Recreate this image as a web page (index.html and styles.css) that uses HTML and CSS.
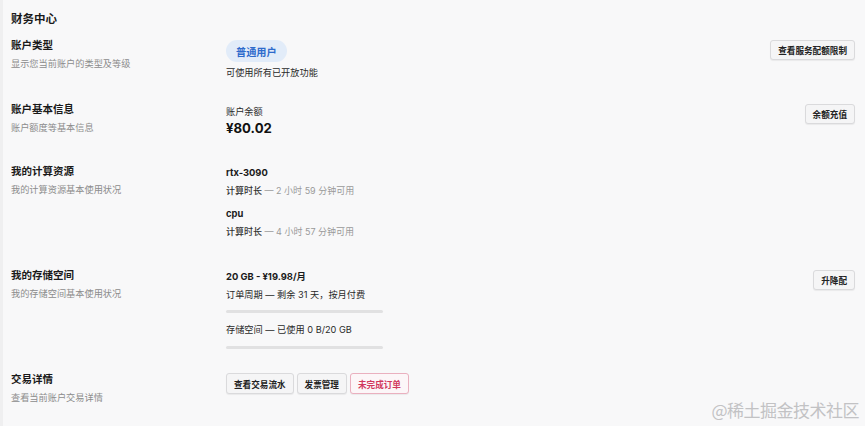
FILE: index.html
```html
<!DOCTYPE html>
<html lang="zh-CN">
<head>
<meta charset="utf-8">
<title>财务中心</title>
<link rel="stylesheet" href="styles.css">
</head>
<body>
<div class="page">
  <h1 class="page-title">财务中心</h1>

  <section class="row">
    <div class="row-head">
      <div class="row-title">账户类型</div>
      <div class="row-desc">显示您当前账户的类型及等级</div>
    </div>
    <div class="row-body">
      <span class="badge">普通用户</span>
      <div class="text mt-badge">可使用所有已开放功能</div>
    </div>
    <div class="row-actions"><button class="btn">查看服务配额限制</button></div>
  </section>

  <section class="row row-balance">
    <div class="row-head">
      <div class="row-title">账户基本信息</div>
      <div class="row-desc">账户额度等基本信息</div>
    </div>
    <div class="row-body">
      <div class="text label">账户余额</div>
      <div class="amount">¥80.02</div>
    </div>
    <div class="row-actions"><button class="btn">余额充值</button></div>
  </section>

  <section class="row row-compute">
    <div class="row-head">
      <div class="row-title">我的计算资源</div>
      <div class="row-desc">我的计算资源基本使用状况</div>
    </div>
    <div class="row-body">
      <div class="res">
        <div class="res-name">rtx-3090</div>
        <div class="res-detail"><span class="res-key">计算时长</span> — 2 小时 59 分钟可用</div>
      </div>
      <div class="res">
        <div class="res-name">cpu</div>
        <div class="res-detail"><span class="res-key">计算时长</span> — 4 小时 57 分钟可用</div>
      </div>
    </div>
    <div class="row-actions"></div>
  </section>

  <section class="row">
    <div class="row-head">
      <div class="row-title">我的存储空间</div>
      <div class="row-desc">我的存储空间基本使用状况</div>
    </div>
    <div class="row-body">
      <div class="res-name">20 GB - ¥19.98/月</div>
      <div class="text store-line">订单周期 — 剩余 31 天，按月付费</div>
      <div class="bar"><div class="bar-fill" style="width: 0%"></div></div>
      <div class="text store-line2">存储空间 — 已使用 0 B/20 GB</div>
      <div class="bar"><div class="bar-fill" style="width: 0%"></div></div>
    </div>
    <div class="row-actions"><button class="btn">升降配</button></div>
  </section>

  <section class="row">
    <div class="row-head">
      <div class="row-title">交易详情</div>
      <div class="row-desc">查看当前账户交易详情</div>
    </div>
    <div class="row-body btn-group">
      <button class="btn">查看交易流水</button>
      <button class="btn">发票管理</button>
      <button class="btn btn-danger">未完成订单</button>
    </div>
    <div class="row-actions"></div>
  </section>

  <div class="watermark">@稀土掘金技术社区</div>
</div>
</body>
</html>
```

FILE: styles.css
```css
* { box-sizing: border-box; }
html, body { margin: 0; padding: 0; }
body {
  background: #f8f8f9;
  font-family: "Inter", "Noto Sans CJK SC", sans-serif;
  color: #1f1f1f;
  width: 865px;
  height: 426px;
  overflow: hidden;
}
.page {
  position: relative;
  height: 426px;
  border-left: 3px solid #efeff0;
  padding: 11px 10px 0 8px;
}
.page-title {
  margin: 0 0 12px 0;
  font-size: 11.5px;
  line-height: 16px;
  font-weight: 700;
  color: #1a1a1a;
}
.row {
  display: grid;
  grid-template-columns: 215px 1fr auto;
  align-items: start;
  margin-bottom: 24px;
}
.row-balance { margin-bottom: 28px; }
.row-compute { margin-bottom: 31px; }
.row-title {
  font-size: 10.5px;
  line-height: 14px;
  font-weight: 700;
  color: #1a1a1a;
}
.row-desc {
  margin-top: 4px;
  font-size: 9.2px;
  line-height: 13px;
  color: #8c8c8c;
}
.row-body {
  display: flex;
  flex-direction: column;
  align-items: flex-start;
  padding-top: 1px;
}
.row-actions {
  display: flex;
  justify-content: flex-end;
  padding-top: 1px;
}
.text {
  font-size: 9.2px;
  line-height: 13px;
  color: #2a2a2a;
}
.badge {
  display: inline-flex;
  align-items: center;
  height: 22px;
  padding: 0 10px;
  border-radius: 11px;
  background: #e2ecf9;
  color: #2e6bcc;
  font-size: 10.2px;
  font-weight: 700;
}
.mt-badge { margin-top: 4px; }
.label { margin-top: 0.5px; }
.amount {
  margin-top: 1.5px;
  font-size: 13.2px;
  line-height: 18px;
  font-weight: 700;
  color: #111;
}
.res + .res { margin-top: 10.5px; }
.res-name {
  font-size: 9.4px;
  line-height: 14px;
  font-weight: 700;
  color: #1a1a1a;
}
.res-detail {
  margin-top: 3.5px;
  font-size: 9px;
  line-height: 13px;
  color: #9a9a9a;
}
.res-key { color: #333; font-weight: 500; }
.store-line { margin-top: 4.5px; }
.store-line2 { margin-top: 10px; }
.bar {
  width: 157px;
  height: 3px;
  margin-top: 9px;
  border-radius: 2px;
  background: #e1e1e2;
  overflow: hidden;
}
.store-line2 + .bar { margin-top: 10px; }
.bar-fill { height: 100%; background: #3b7be0; }
.btn {
  display: inline-flex;
  align-items: center;
  height: 20px;
  padding: 0 7px;
  border: 1px solid #dadadc;
  border-radius: 3px;
  background: #f5f5f6;
  box-shadow: 0 1px 1px rgba(0,0,0,0.06);
  font-family: "Noto Sans CJK SC", sans-serif;
  font-size: 8.6px;
  font-weight: 700;
  color: #222;
  cursor: pointer;
}
.btn-group {
  flex-direction: row;
  gap: 3px;
  padding-top: 0;
}
.btn-group .btn { height: 21px; }
.btn-danger {
  border-color: #eab0bf;
  background: #fcf6f8;
  color: #d1375d;
}
.watermark {
  position: absolute;
  right: 6px;
  bottom: 6px;
  font-family: "Noto Sans CJK SC", sans-serif;
  font-size: 17px;
  line-height: 20px;
  color: #c2c2c4;
  letter-spacing: -0.5px;
}
```
